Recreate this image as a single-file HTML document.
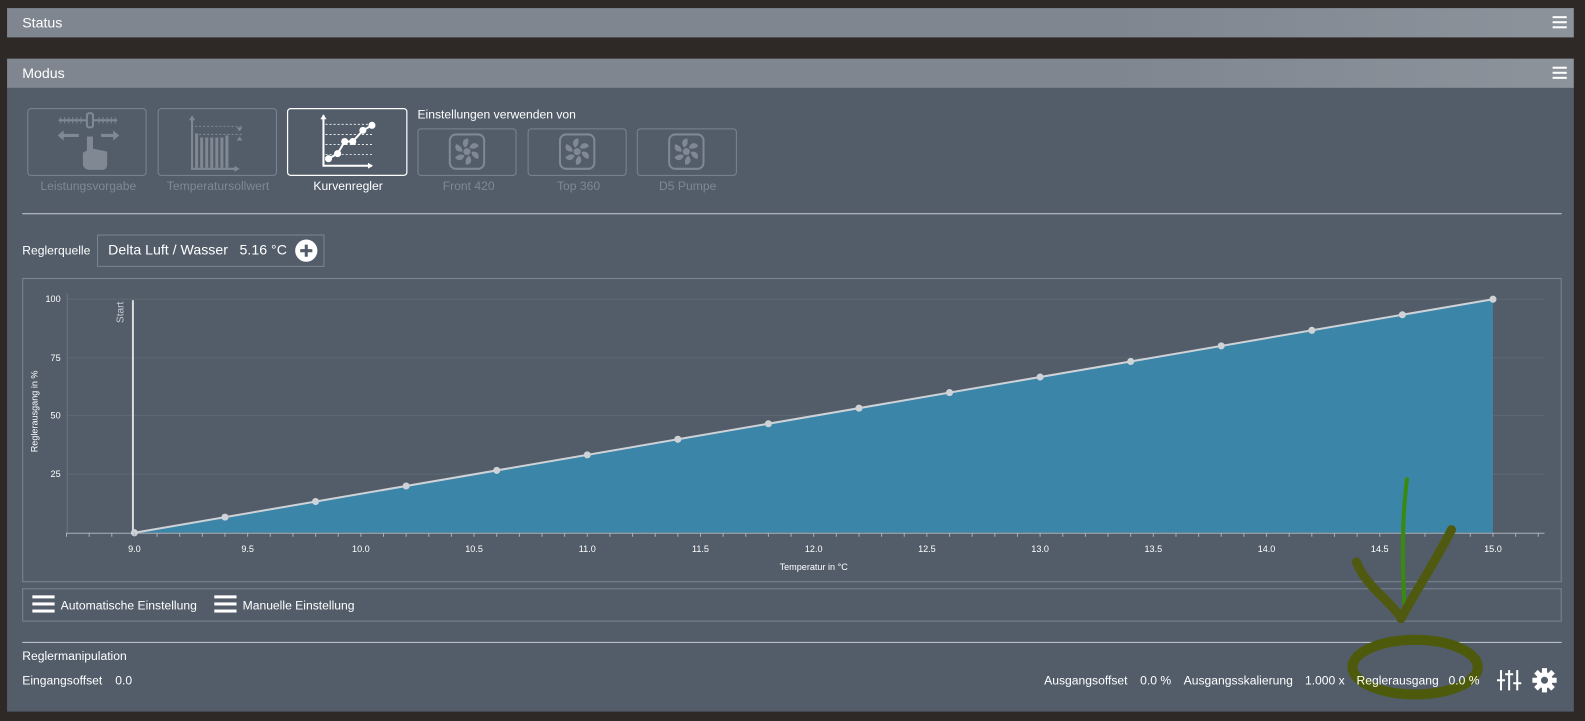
<!DOCTYPE html>
<html><head><meta charset="utf-8"><style>
body{margin:0;width:1585px;height:721px;background:#2e2826;font-family:"Liberation Sans",sans-serif;overflow:hidden;color:#fff}
#w{position:absolute;left:0;top:0;width:1568px;height:713px;transform:scale(1.0108);transform-origin:0 0}
.hdr{position:absolute;left:7px;width:1550px;height:29px;background:linear-gradient(90deg,#7f8690 0%,#7f8690 70%,#8c939b 100%);font-size:14px;line-height:29px;text-indent:15px;color:#fff}
.burg{position:absolute;right:7px;top:8px;width:14px;height:12px;border-top:2px solid #fff;border-bottom:2px solid #fff;box-sizing:border-box}
.burg:after{content:"";position:absolute;left:0;right:0;top:3px;height:2px;background:#fff}
.body{position:absolute;left:7px;top:87px;width:1550px;height:617px;background:#525d69}
.t{position:absolute;font-size:12px;white-space:nowrap}
.g{color:#7f8893}
</style></head><body><div id="w">
<div class="hdr" style="top:8px">Status<div class="burg"></div></div>
<div class="hdr" style="top:58px">Modus<div class="burg"></div></div>
<div class="body"></div>
<svg width="1568" height="713" style="position:absolute;left:0;top:0">
<defs>
<g id="fan">
<rect x="-17" y="-17" width="34" height="34" rx="6" fill="none" stroke="#7f8893" stroke-width="2"/>
<g fill="#7f8893">
<path id="bl" d="M-2 -4 C-6 -8 -4 -13 1 -13 C2 -9 1 -6 -2 -4z"/>
<use href="#bl" transform="rotate(60)"/><use href="#bl" transform="rotate(120)"/><use href="#bl" transform="rotate(180)"/><use href="#bl" transform="rotate(240)"/><use href="#bl" transform="rotate(300)"/>
<circle r="3.5"/>
</g>
</g>
</defs>
<rect x="27.5" y="107.5" width="117" height="66" rx="3" fill="none" stroke="#7c8591"/>
<rect x="156.5" y="107.5" width="117" height="66" rx="3" fill="none" stroke="#7c8591"/>
<rect x="284.5" y="107.5" width="118" height="66" rx="3" fill="none" stroke="#fff" stroke-width="1.2"/>
<rect x="413.5" y="127.5" width="97" height="46" rx="3" fill="none" stroke="#7c8591"/>
<rect x="522.5" y="127.5" width="97" height="46" rx="3" fill="none" stroke="#7c8591"/>
<rect x="630.5" y="127.5" width="98" height="46" rx="3" fill="none" stroke="#7c8591"/>
<use href="#fan" x="462" y="150"/><use href="#fan" x="571" y="150"/><use href="#fan" x="679" y="150"/>
<g stroke="#7f8893" fill="#7f8893">
<line x1="58" y1="119" x2="116" y2="119" stroke-width="2"/>
<g stroke-width="1"><path d="M60 116v6M64 116v6M68 116v6M72 116v6M76 116v6M80 116v6M98 116v6M102 116v6M106 116v6M110 116v6M114 116v6"/></g>
<rect x="86" y="112" width="6" height="14" rx="2" fill="#525d69" stroke-width="2"/>
<path d="M60 134h18M100 134h16" stroke-width="3" fill="none"/>
<path d="M57 134l6-5v10zM118 134l-6-5v10z" stroke="none"/>
<path d="M86 135v14l-4 2v11c0 4 3 6 7 6h13c3 0 4-3 4-6v-12l-14-3v-12z" stroke="none"/>
</g>
<g stroke="#7f8893" fill="#7f8893">
<path d="M190 117v50h44" fill="none" stroke-width="2"/>
<path d="M187 119l3-5 3 5zM232 164l5 3-5 3z" stroke="none"/>
<rect x="193" y="132" width="3" height="34" stroke="none"/>
<rect x="198" y="136" width="3" height="30" stroke="none"/><rect x="203" y="136" width="3" height="30" stroke="none"/>
<rect x="208" y="136" width="3" height="30" stroke="none"/><rect x="213" y="136" width="3" height="30" stroke="none"/>
<rect x="218" y="136" width="3" height="30" stroke="none"/><rect x="223" y="134" width="3" height="32" stroke="none"/>
<line x1="193" y1="125" x2="240" y2="125" stroke-dasharray="2 2" stroke-width="1"/>
<line x1="193" y1="133" x2="240" y2="133" stroke-dasharray="2 2" stroke-width="1"/>
<path d="M234 126l3 4 3-4zM234 139l3-4 3 4z" stroke="none"/>
</g>
<g stroke="#fff" fill="#fff">
<path d="M320 114v50h48" fill="none" stroke-width="2"/>
<path d="M317 118l3-5 3 5zM364 161l5 3-5 3z" stroke="none"/>
<g stroke-width="0.8" stroke-dasharray="2 2"><line x1="322" y1="123" x2="368" y2="123"/><line x1="322" y1="133" x2="368" y2="133"/><line x1="322" y1="143" x2="368" y2="143"/><line x1="322" y1="153" x2="368" y2="153"/></g>
<polyline points="325,157 334,152 341,140 349,140 359,129 368,124" fill="none" stroke-width="2"/>
<circle cx="325" cy="157" r="3"/><circle cx="334" cy="152" r="3"/><circle cx="341" cy="140" r="3"/><circle cx="349" cy="140" r="3"/><circle cx="359" cy="129" r="3"/><circle cx="368" cy="124" r="3"/>
</g>
<line x1="22" y1="211.5" x2="1545" y2="211.5" stroke="#c8ccd1"/>
<rect x="96.5" y="232.5" width="224" height="31" fill="none" stroke="#7c8591"/>
<circle cx="303" cy="248" r="11" fill="#fff"/><path d="M297 248h12M303 242v12" stroke="#525d69" stroke-width="3"/>
<rect x="22.5" y="275.5" width="1522" height="300" fill="none" stroke="#7c8591"/>
<g stroke="#5d6873" stroke-width="1">
<line x1="66" y1="296" x2="1528" y2="296"/><line x1="66" y1="354" x2="1528" y2="354"/><line x1="66" y1="411" x2="1528" y2="411"/><line x1="66" y1="469" x2="1528" y2="469"/>
</g>
<polygon points="133,527 1477,296 1477,527" fill="#3b85a9"/>
<line x1="66" y1="527.5" x2="1528" y2="527.5" stroke="#aab0b7"/>
<line x1="66.5" y1="290" x2="66.5" y2="527" stroke="#6c7580"/>
<line x1="131.5" y1="297" x2="131.5" y2="527" stroke="#ddd" stroke-width="2"/>
<polyline points="133,527 1477,296" stroke="#cfd2d6" stroke-width="2" fill="none"/>
<g fill="#cfd2d6" id="pts"></g>
<g id="ticks" stroke="#aab0b7"></g>
<g font-size="9" fill="#fff" id="lbl"></g>
<g font-size="9" fill="#fff" text-anchor="end"><text x="60" y="299">100</text><text x="60" y="357">75</text><text x="60" y="414">50</text><text x="60" y="472">25</text></g>
<text x="805" y="564" font-size="9" fill="#fff" text-anchor="middle">Temperatur in °C</text>
<text transform="translate(37,407) rotate(-90)" font-size="9" fill="#fff" text-anchor="middle">Reglerausgang in %</text>
<text transform="translate(122,309) rotate(-90)" font-size="10" fill="#c8ccd1" text-anchor="middle">Start</text>
<rect x="22.5" y="582.5" width="1522" height="32" fill="none" stroke="#7c8591"/>
<g fill="#fff"><rect x="32" y="589" width="22" height="3"/><rect x="32" y="596" width="22" height="3"/><rect x="32" y="603" width="22" height="3"/>
<rect x="212" y="589" width="22" height="3"/><rect x="212" y="596" width="22" height="3"/><rect x="212" y="603" width="22" height="3"/></g>
<line x1="22" y1="635.5" x2="1545" y2="635.5" stroke="#c8ccd1"/>
<g stroke="#fff" stroke-width="2"><path d="M1485 663v20M1493 663v20M1501 663v20"/><path d="M1481 673h8M1489 667h8M1497 676h8"/></g>
<g transform="translate(1528,673)" fill="#fff">
<circle r="8"/>
<rect x="-2.5" y="-12" width="5" height="24"/><rect x="-2.5" y="-12" width="5" height="24" transform="rotate(45)"/><rect x="-2.5" y="-12" width="5" height="24" transform="rotate(90)"/><rect x="-2.5" y="-12" width="5" height="24" transform="rotate(135)"/>
<circle r="3.5" fill="#525d69"/>
</g>
<g fill="none" stroke-linecap="round">
<path d="M1392 474c-4 30-6 70 -2 135" stroke="#3a8a10" stroke-width="4"/>
<path d="M1342 556c10 25 30 35 44 55 M1436 524c-15 30 -35 60 -50 88" stroke="#4f5a10" stroke-width="9"/>
<ellipse cx="1400" cy="660" rx="62" ry="27" stroke="#4d5a0c" stroke-width="10"/>
</g>
</svg>
<div class="t" style="left:413px;top:106px">Einstellungen verwenden von</div>
<div class="t g" style="left:40px;top:177px">Leistungsvorgabe</div>
<div class="t g" style="left:165px;top:177px">Temperatursollwert</div>
<div class="t" style="left:310px;top:177px">Kurvenregler</div>
<div class="t g" style="left:438px;top:177px">Front 420</div>
<div class="t g" style="left:551px;top:177px">Top 360</div>
<div class="t g" style="left:652px;top:177px">D5 Pumpe</div>
<div class="t" style="left:22px;top:241px">Reglerquelle</div>
<div class="t" style="left:107px;top:239px;font-size:14px">Delta Luft / Wasser</div>
<div class="t" style="left:237px;top:239px;font-size:14px">5.16 °C</div>
<div class="t" style="left:60px;top:592px">Automatische Einstellung</div>
<div class="t" style="left:240px;top:592px">Manuelle Einstellung</div>
<div class="t" style="left:22px;top:642px">Reglermanipulation</div>
<div class="t" style="left:22px;top:666px">Eingangsoffset</div>
<div class="t" style="left:114px;top:666px">0.0</div>
<div class="t" style="left:1033px;top:666px">Ausgangsoffset</div>
<div class="t" style="left:1128px;top:666px">0.0 %</div>
<div class="t" style="left:1171px;top:666px">Ausgangsskalierung</div>
<div class="t" style="left:1291px;top:666px">1.000 x</div>
<div class="t" style="left:1342px;top:666px">Reglerausgang</div>
<div class="t" style="left:1433px;top:666px">0.0 %</div>
</div>
<script>
var ns="http://www.w3.org/2000/svg";
var pts=document.getElementById("pts"),tk=document.getElementById("ticks"),lb=document.getElementById("lbl");
for(var i=0;i<=15;i++){var x=133+i*89.6,y=527-i*231/15;var c=document.createElementNS(ns,"circle");c.setAttribute("cx",x);c.setAttribute("cy",y);c.setAttribute("r",3.5);pts.appendChild(c);}
for(var v=8.7;v<=15.25;v+=0.1){var x=133+(v-9)*224;var l=document.createElementNS(ns,"line");l.setAttribute("x1",x);l.setAttribute("x2",x);l.setAttribute("y1",527);l.setAttribute("y2",531);tk.appendChild(l);}
for(var v=9;v<=15.01;v+=0.5){var x=133+(v-9)*224;var t=document.createElementNS(ns,"text");t.setAttribute("x",x);t.setAttribute("y",546);t.setAttribute("text-anchor","middle");t.textContent=v.toFixed(1);lb.appendChild(t);}
</script>
</body></html>
